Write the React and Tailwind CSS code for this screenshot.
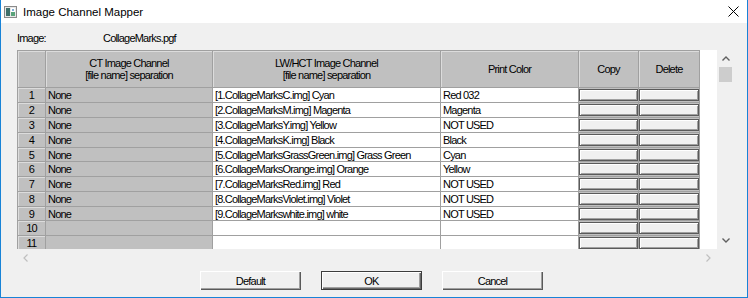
import React from "react";

const rows = [
  { n: 1, ct: "None", lw: "[1.CollageMarksC.img] Cyan", pc: "Red 032" },
  { n: 2, ct: "None", lw: "[2.CollageMarksM.img] Magenta", pc: "Magenta" },
  { n: 3, ct: "None", lw: "[3.CollageMarksY.img] Yellow", pc: "NOT USED" },
  { n: 4, ct: "None", lw: "[4.CollageMarksK.img] Black", pc: "Black" },
  { n: 5, ct: "None", lw: "[5.CollageMarksGrassGreen.img] Grass Green", pc: "Cyan" },
  { n: 6, ct: "None", lw: "[6.CollageMarksOrange.img] Orange", pc: "Yellow" },
  { n: 7, ct: "None", lw: "[7.CollageMarksRed.img] Red", pc: "NOT USED" },
  { n: 8, ct: "None", lw: "[8.CollageMarksViolet.img] Violet", pc: "NOT USED" },
  { n: 9, ct: "None", lw: "[9.CollageMarkswhite.img] white", pc: "NOT USED" },
  { n: 10, ct: "", lw: "", pc: "" },
  { n: 11, ct: "", lw: "", pc: "" },
];

const heights = [15, 15, 15, 15, 14, 15, 15, 15, 14, 15, 15];

const line = "border-r border-b border-[#a0a0a0]";
const fixed = "bg-[#c0c0c0] shadow-[inset_1px_1px_0_#dcdcdc]";

function CellButton() {
  return (
    <div className="h-[12px] w-full bg-[#f0f0f0] border border-[#5a5a5a] shadow-[inset_1px_1px_0_#ffffff,inset_-1px_-1px_0_#a0a0a0]" />
  );
}

function Row({ r, h }) {
  return (
    <div className={`flex ${h === 14 ? "h-[14px]" : "h-[15px]"}`}>
      <div className={`w-[28px] ${line} ${fixed} flex items-center justify-center`}>{r.n}</div>
      <div className={`w-[167px] ${line} bg-[#c0c0c0] flex items-center pl-[2px] whitespace-nowrap`}>{r.ct}</div>
      <div className={`w-[228px] ${line} bg-white flex items-center pl-[2px] whitespace-nowrap overflow-hidden`}>{r.lw}</div>
      <div className={`w-[138px] ${line} bg-white flex items-center pl-[2px] whitespace-nowrap`}>{r.pc}</div>
      <div className={`w-[60px] ${line} bg-[#c0c0c0] flex items-center`}>
        <CellButton />
      </div>
      <div className={`w-[61px] ${line} bg-[#c0c0c0] flex items-center`}>
        <CellButton />
      </div>
    </div>
  );
}

function DlgButton({ label, isDefault }) {
  return (
    <div
      className={`w-[101px] h-[19px] bg-[#f0f0f0] flex items-center justify-center ${
        isDefault
          ? "border border-[#3c3c3c] shadow-[inset_1px_1px_0_#ffffff,inset_-1px_-1px_0_#696969,inset_-2px_-2px_0_#a0a0a0]"
          : "shadow-[inset_1px_1px_0_#ffffff,inset_-1px_-1px_0_#5a5a5a,inset_-2px_-2px_0_#a0a0a0]"
      }`}
    >
      {label}
    </div>
  );
}

export default function App() {
  return (
    <div className="w-[748px] h-[298px] bg-[#f0f0f0] border-l border-r border-b border-[#1883d7] flex flex-col text-black text-[11px] leading-[14px] tracking-[-0.8px] font-['Liberation_Sans',Arial,sans-serif] overflow-hidden">
      {/* Title bar */}
      <div className="h-[23px] bg-white flex items-center shrink-0 tracking-normal">
        <svg width="13" height="12" viewBox="0 0 13 12" className="ml-[3px]">
          <rect x="0.5" y="0.5" width="12" height="11" fill="#e8e8e8" stroke="#8a8a8a" />
          <rect x="2" y="2" width="4" height="8" fill="#3f6f6a" />
          <rect x="7" y="2" width="4" height="8" fill="#ffffff" />
          <rect x="7" y="6" width="4" height="4" fill="#5aa37a" />
          <rect x="8" y="3" width="2" height="2" fill="#7fb0d8" />
        </svg>
        <span className="ml-[6px] text-[11.5px]">Image Channel Mapper</span>
        <svg width="11" height="11" viewBox="0 0 11 11" className="ml-auto mr-[8px]">
          <path d="M0.5 0.5 L10.5 10.5 M10.5 0.5 L0.5 10.5" stroke="#000" strokeWidth="1" />
        </svg>
      </div>

      <div className="pl-[16px] flex flex-col">
        {/* Image row */}
        <div className="flex mt-[8px] h-[14px] items-center">
          <div className="w-[86px]">Image:</div>
          <div>CollageMarks.pgf</div>
        </div>

        {/* Grid */}
        <div className="mt-[5px] flex flex-col w-[717px]">
          <div className="flex h-[199px]">
            <div className="w-[700px] h-[199px] bg-white overflow-hidden">
              <div className="border-l border-t border-[#a0a0a0] w-[683px]">
                {/* Header */}
                <div className="flex h-[37px] leading-[12px]">
                  <div className={`w-[28px] ${line} ${fixed}`} />
                  <div className={`w-[167px] ${line} ${fixed} flex flex-col items-center justify-center`}>
                    <div>CT Image Channel</div>
                    <div>[file name] separation</div>
                  </div>
                  <div className={`w-[228px] ${line} ${fixed} flex flex-col items-center justify-center`}>
                    <div>LW/HCT Image Channel</div>
                    <div>[file name] separation</div>
                  </div>
                  <div className={`w-[138px] ${line} ${fixed} flex items-center justify-center`}>Print Color</div>
                  <div className={`w-[60px] ${line} ${fixed} flex items-center justify-center`}>Copy</div>
                  <div className={`w-[61px] ${line} ${fixed} flex items-center justify-center`}>Delete</div>
                </div>
                {rows.map((r, i) => (
                  <Row key={r.n} r={r} h={heights[i]} />
                ))}
              </div>
            </div>
            {/* Vertical scrollbar */}
            <div className="w-[17px] h-[199px] flex flex-col">
              <div className="h-[17px] flex items-center justify-center">
                <svg width="8" height="5" viewBox="0 0 8 5">
                  <path d="M0.5 4.5 L4 1 L7.5 4.5" stroke="#606060" strokeWidth="1.4" fill="none" />
                </svg>
              </div>
              <div className="h-[15px] mx-[2px] bg-[#cdcdcd]" />
              <div className="flex-1" />
              <div className="h-[17px] flex items-center justify-center">
                <svg width="8" height="5" viewBox="0 0 8 5">
                  <path d="M0.5 0.5 L4 4 L7.5 0.5" stroke="#606060" strokeWidth="1.4" fill="none" />
                </svg>
              </div>
            </div>
          </div>
          {/* Horizontal scrollbar */}
          <div className="flex h-[17px] w-[700px] items-center justify-between">
            <div className="w-[17px] flex items-center justify-center">
              <svg width="5" height="8" viewBox="0 0 5 8">
                <path d="M4.5 0.5 L1 4 L4.5 7.5" stroke="#bfbfbf" strokeWidth="1.2" fill="none" />
              </svg>
            </div>
            <div className="w-[17px] flex items-center justify-center">
              <svg width="5" height="8" viewBox="0 0 5 8">
                <path d="M0.5 0.5 L4 4 L0.5 7.5" stroke="#bfbfbf" strokeWidth="1.2" fill="none" />
              </svg>
            </div>
          </div>
        </div>
      </div>

      {/* Buttons */}
      <div className="flex gap-[20px] pl-[199px] mt-[5px]">
        <DlgButton label="Default" />
        <DlgButton label="OK" isDefault />
        <DlgButton label="Cancel" />
      </div>
    </div>
  );
}
